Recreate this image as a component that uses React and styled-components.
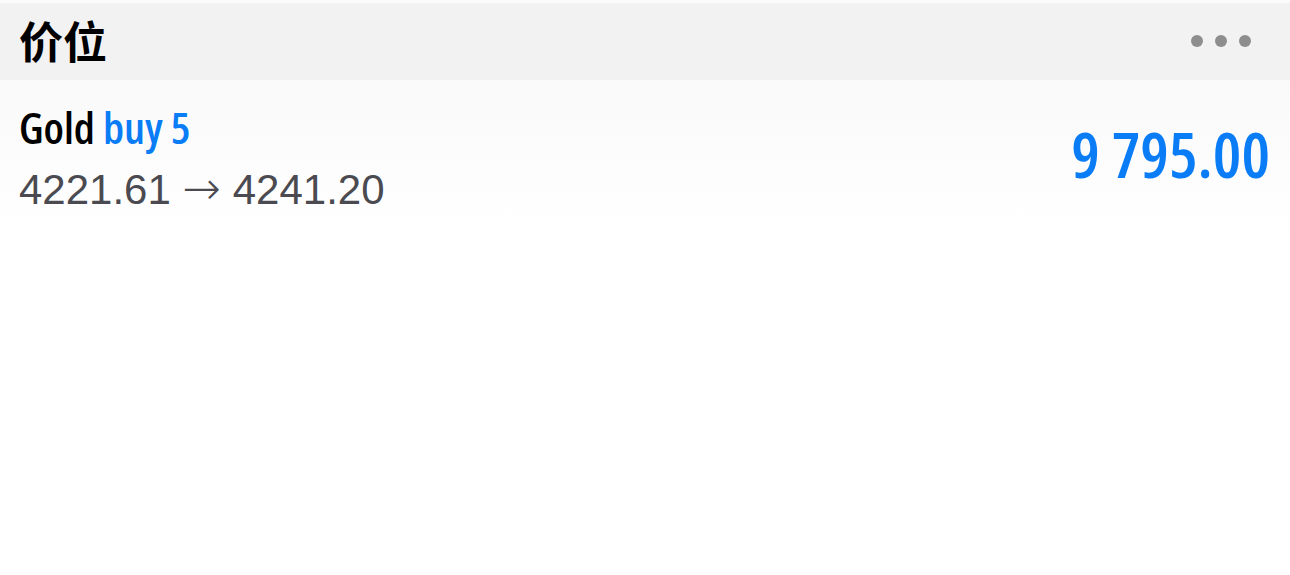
import React from "react";
import styled, { createGlobalStyle } from "styled-components";

const Global = createGlobalStyle`
  html, body {
    margin: 0;
    padding: 0;
    background: #ffffff;
  }
  body {
    font-family: "Liberation Sans", Arial, sans-serif;
  }
`;

const Page = styled.div`
  width: 1290px;
  padding-top: 3px;
  background: #fbfbfb;
`;

const Header = styled.div`
  height: 77px;
  background: #f2f2f2;
  display: flex;
  align-items: center;
  justify-content: space-between;
  padding: 0 39px 0 19px;
`;

const Title = styled.h1`
  margin: 0 0 4px;
  font-family: "Noto Sans CJK SC", sans-serif;
  font-weight: 700;
  font-size: 44px;
  line-height: 1;
  color: #000;
`;

const Dots = styled.div`
  display: flex;
  gap: 12px;
  margin-bottom: 2px;
`;

const Dot = styled.span`
  width: 12px;
  height: 12px;
  border-radius: 50%;
  background: #8e8e8e;
`;

const Row = styled.div`
  height: 150px;
  display: flex;
  align-items: center;
  justify-content: space-between;
  padding: 0 20px 0 19px;
  background: linear-gradient(#f9f9f9, #ffffff);
`;

const Info = styled.div`
  display: flex;
  flex-direction: column;
  gap: 16px;
  margin-top: 6px;
`;

const Name = styled.div`
  font-family: "Open Sans", sans-serif;
  font-stretch: 75%;
  font-weight: 600;
  font-size: 44px;
  line-height: 1;
  color: #000;
`;

const Side = styled.span`
  color: #0a7cf6;
`;

const Prices = styled.div`
  font-family: "Liberation Sans", Arial, sans-serif;
  font-size: 42px;
  line-height: 1;
  color: #4a4a50;
`;

const Arrow = styled.span`
  font-family: "DejaVu Sans", sans-serif;
  font-weight: 300;
  font-size: 46px;
`;

const Amount = styled.div`
  font-family: "Open Sans", sans-serif;
  font-stretch: 75%;
  font-weight: 600;
  font-size: 64px;
  line-height: 1;
  color: #0a7cf6;
  margin-bottom: 2px;
`;

const Rest = styled.div`
  height: 345px;
  background: #ffffff;
`;

export default function App() {
  return (
    <>
      <Global />
      <Page>
        <Header>
          <Title>价位</Title>
          <Dots>
            <Dot />
            <Dot />
            <Dot />
          </Dots>
        </Header>
        <Row>
          <Info>
            <Name>
              Gold <Side>buy 5</Side>
            </Name>
            <Prices>
              4221.61 <Arrow>→</Arrow> 4241.20
            </Prices>
          </Info>
          <Amount>9 795.00</Amount>
        </Row>
        <Rest />
      </Page>
    </>
  );
}
